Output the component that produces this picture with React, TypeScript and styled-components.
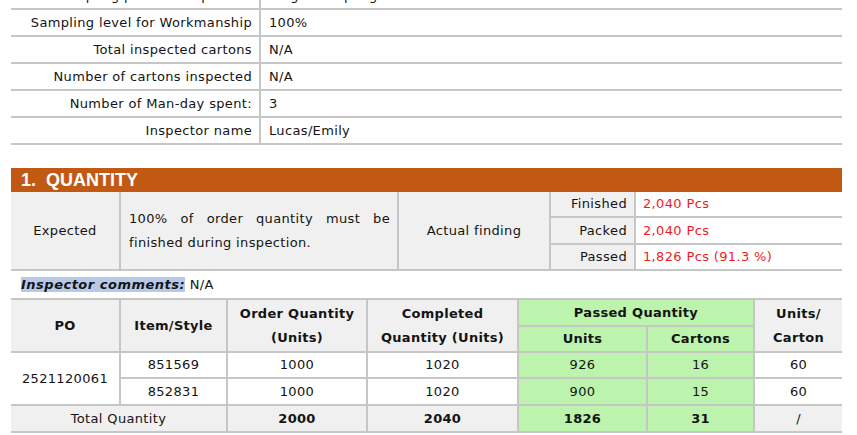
import React from "react";
import styled, { createGlobalStyle } from "styled-components";

const Global = createGlobalStyle`
  html, body { margin: 0; padding: 0; background: #ffffff; }
  body {
    font-family: "DejaVu Sans", sans-serif;
    font-size: 13px;
    letter-spacing: 0.35px;
    color: #141414;
    overflow: hidden;
  }
`;

const LINE = "#c6c6c6";
const GRAY = "#f0f0f0";
const GREEN = "#bcf3ad";
const RED = "#f01c1c";

const Page = styled.div`
  width: 831px;
  padding: 0 15px 0 11px;
`;

const InfoTable = styled.table`
  width: 831px;
  border-collapse: separate;
  border-spacing: 0;
  table-layout: fixed;
  margin-top: -17px;
`;

const InfoLabel = styled.td`
  text-align: right;
  padding: 0 7px 0 0;
  line-height: 25px;
  border-bottom: 2px solid ${LINE};
  border-right: 2px solid ${LINE};
  white-space: nowrap;
`;

const InfoValue = styled.td`
  padding: 0 0 0 8px;
  line-height: 25px;
  border-bottom: 2px solid ${LINE};
`;

const SectionBar = styled.div`
  margin-top: 23px;
  height: 24px;
  background: #c25912;
  color: #ffffff;
  font-family: "Liberation Sans", Arial, sans-serif;
  font-weight: bold;
  font-size: 18px;
  letter-spacing: 0;
  line-height: 25px;
  padding-left: 10px;
  white-space: pre;
`;

const Grid = styled.table`
  width: 831px;
  border-collapse: separate;
  border-spacing: 0;
  table-layout: fixed;
`;

type CellProps = {
  $bg?: string;
  $align?: "left" | "center" | "right" | "justify";
  $last?: boolean;
  $bold?: boolean;
  $color?: string;
  $lh?: number;
};

const Cell = styled.td<CellProps>`
  background: ${(p) => p.$bg || "#ffffff"};
  text-align: ${(p) => p.$align || "center"};
  color: ${(p) => p.$color || "inherit"};
  font-weight: ${(p) => (p.$bold ? "bold" : "normal")};
  letter-spacing: ${(p) => (p.$bold ? "0.3px" : "0.35px")};
  line-height: ${(p) => p.$lh || 25}px;
  padding: 0 7px;
  border-bottom: 2px solid ${LINE};
  border-right: ${(p) => (p.$last ? "none" : `2px solid ${LINE}`)};
  vertical-align: middle;
  white-space: nowrap;
`;

const JustCell = styled(Cell)`
  white-space: normal;
  text-align: justify;
  padding: 0 7px 0 8px;
`;

const Comments = styled.div`
  padding: 5px 0 0 10px;
  height: 22px;
  line-height: 18px;
`;

const Highlight = styled.span`
  background: #b6c9e8;
  font-weight: bold;
  font-style: italic;
  letter-spacing: 0.5px;
`;

const OrderTable = styled(Grid)`
  border-top: 2px solid ${LINE};
`;

const Col = styled.col<{ $w: number }>`
  width: ${(p) => p.$w}px;
`;

export default function App() {
  const info: [string, string][] = [
    ["Sampling plan for Inspection", "Single sampling"],
    ["Sampling level for Workmanship", "100%"],
    ["Total inspected cartons", "N/A"],
    ["Number of cartons inspected", "N/A"],
    ["Number of Man-day spent:", "3"],
    ["Inspector name", "Lucas/Emily"],
  ];

  return (
    <Page>
      <Global />
      <InfoTable>
        <colgroup>
          <Col $w={250} />
          <Col $w={581} />
        </colgroup>
        <tbody>
          {info.map(([k, v]) => (
            <tr key={k}>
              <InfoLabel>{k}</InfoLabel>
              <InfoValue>{v}</InfoValue>
            </tr>
          ))}
        </tbody>
      </InfoTable>

      <SectionBar>{"1.  QUANTITY"}</SectionBar>
      <Grid>
        <colgroup>
          <Col $w={110} />
          <Col $w={278} />
          <Col $w={152} />
          <Col $w={85} />
          <Col $w={206} />
        </colgroup>
        <tbody>
          <tr>
            <Cell rowSpan={3} $bg={GRAY}>Expected</Cell>
            <JustCell rowSpan={3} $bg={GRAY} $lh={24}>
              100% of order quantity must be finished during inspection.
            </JustCell>
            <Cell rowSpan={3} $bg={GRAY}>Actual finding</Cell>
            <Cell $bg={GRAY} $align="right" $lh={24}>Finished</Cell>
            <Cell $align="left" $color={RED} $last $lh={24}>2,040 Pcs</Cell>
          </tr>
          <tr>
            <Cell $bg={GRAY} $align="right" $lh={25}>Packed</Cell>
            <Cell $align="left" $color={RED} $last $lh={25}>2,040 Pcs</Cell>
          </tr>
          <tr>
            <Cell $bg={GRAY} $align="right" $lh={24}>Passed</Cell>
            <Cell $align="left" $color={RED} $last $lh={24}>1,826 Pcs (91.3 %)</Cell>
          </tr>
        </tbody>
      </Grid>

      <Comments>
        <Highlight>Inspector comments:</Highlight> N/A
      </Comments>

      <OrderTable>
        <colgroup>
          <Col $w={110} />
          <Col $w={107} />
          <Col $w={140} />
          <Col $w={151} />
          <Col $w={129} />
          <Col $w={107} />
          <Col $w={87} />
        </colgroup>
        <tbody>
          <tr>
            <Cell rowSpan={2} $bg={GRAY} $bold>PO</Cell>
            <Cell rowSpan={2} $bg={GRAY} $bold>Item/Style</Cell>
            <Cell rowSpan={2} $bg={GRAY} $bold $lh={24}>
              Order Quantity
              <br />
              (Units)
            </Cell>
            <Cell rowSpan={2} $bg={GRAY} $bold $lh={24}>
              Completed
              <br />
              Quantity (Units)
            </Cell>
            <Cell colSpan={2} $bg={GREEN} $bold>Passed Quantity</Cell>
            <Cell rowSpan={2} $bg={GRAY} $bold $last $lh={24}>
              Units/
              <br />
              Carton
            </Cell>
          </tr>
          <tr>
            <Cell $bg={GREEN} $bold $lh={24}>Units</Cell>
            <Cell $bg={GREEN} $bold $lh={24}>Cartons</Cell>
          </tr>
          <tr>
            <Cell rowSpan={2}>2521120061</Cell>
            <Cell $lh={24}>851569</Cell>
            <Cell $lh={24}>1000</Cell>
            <Cell $lh={24}>1020</Cell>
            <Cell $bg={GREEN} $lh={24}>926</Cell>
            <Cell $bg={GREEN} $lh={24}>16</Cell>
            <Cell $last $lh={24}>60</Cell>
          </tr>
          <tr>
            <Cell>852831</Cell>
            <Cell>1000</Cell>
            <Cell>1020</Cell>
            <Cell $bg={GREEN}>900</Cell>
            <Cell $bg={GREEN}>15</Cell>
            <Cell $last>60</Cell>
          </tr>
          <tr>
            <Cell colSpan={2} $bg={GRAY}>Total Quantity</Cell>
            <Cell $bg={GRAY} $bold>2000</Cell>
            <Cell $bg={GRAY} $bold>2040</Cell>
            <Cell $bg={GREEN} $bold>1826</Cell>
            <Cell $bg={GREEN} $bold>31</Cell>
            <Cell $bg={GRAY} $last>/</Cell>
          </tr>
        </tbody>
      </OrderTable>
    </Page>
  );
}
